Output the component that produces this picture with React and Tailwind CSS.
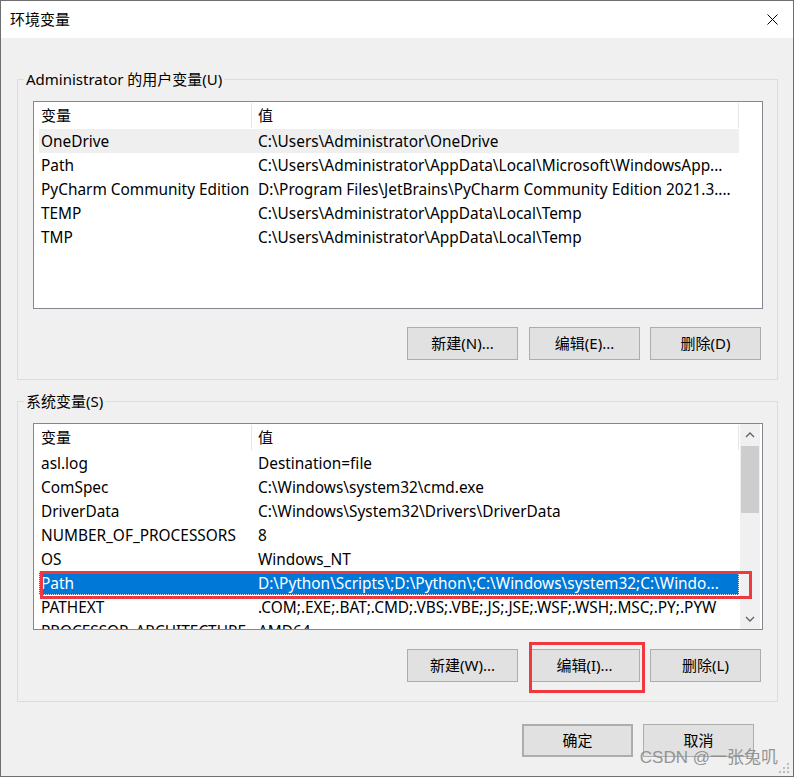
import React from 'react';

const userVars = [
  ['OneDrive', 'C:\\Users\\Administrator\\OneDrive'],
  ['Path', 'C:\\Users\\Administrator\\AppData\\Local\\Microsoft\\WindowsApp...'],
  ['PyCharm Community Edition', 'D:\\Program Files\\JetBrains\\PyCharm Community Edition 2021.3....'],
  ['TEMP', 'C:\\Users\\Administrator\\AppData\\Local\\Temp'],
  ['TMP', 'C:\\Users\\Administrator\\AppData\\Local\\Temp'],
];

const sysVars = [
  ['asl.log', 'Destination=file'],
  ['ComSpec', 'C:\\Windows\\system32\\cmd.exe'],
  ['DriverData', 'C:\\Windows\\System32\\Drivers\\DriverData'],
  ['NUMBER_OF_PROCESSORS', '8'],
  ['OS', 'Windows_NT'],
  ['Path', 'D:\\Python\\Scripts\\;D:\\Python\\;C:\\Windows\\system32;C:\\Windo...'],
  ['PATHEXT', '.COM;.EXE;.BAT;.CMD;.VBS;.VBE;.JS;.JSE;.WSF;.WSH;.MSC;.PY;.PYW'],
  ['PROCESSOR_ARCHITECTURE', 'AMD64'],
];

const ListHeader = () => (
  <div className="flex h-[27px] items-center">
    <div className="w-[217px] pl-[7px]">变量</div>
    <div className="w-px h-[25px] bg-[#e5e5e5]" />
    <div className="w-[486px] pl-[6px]">值</div>
    <div className="w-px h-[25px] bg-[#e5e5e5]" />
  </div>
);

const Row = ({ name, value, hover, selected }) => {
  let cls = 'ml-[5px] w-[700px] h-[24px] pt-[2px] flex items-center whitespace-nowrap text-[15.4px]';
  if (hover) cls += ' bg-[#efefef]';
  if (selected) cls += ' bg-[#0078d7] text-white outline outline-1 outline-dotted outline-[#cfe3f7] -outline-offset-1';
  return (
    <div className={cls}>
      <div className="w-[217px] pl-[2px] overflow-hidden">{name}</div>
      <div className="flex-1 pl-[2px] overflow-hidden">{value}</div>
    </div>
  );
};

const WinButton = ({ children, className = '' }) => (
  <button
    type="button"
    className={'w-[111px] h-[33px] bg-[#e1e1e1] border border-[#adadad] flex items-center justify-center ' + className}
  >
    {children}
  </button>
);

const ScrollBar = () => (
  <div className="w-[20px] h-full bg-[#f0f0f0] flex flex-col">
    <div className="h-[22px] flex items-center justify-center">
      <svg width="10" height="6" viewBox="0 0 10 6">
        <path d="M1 5 L5 1 L9 5" fill="none" stroke="#606060" strokeWidth="1.3" />
      </svg>
    </div>
    <div className="h-[67px] mx-[1px] bg-[#cdcdcd]" />
    <div className="flex-1" />
    <div className="h-[21px] flex items-center justify-center">
      <svg width="10" height="6" viewBox="0 0 10 6">
        <path d="M1 1 L5 5 L9 1" fill="none" stroke="#606060" strokeWidth="1.3" />
      </svg>
    </div>
  </div>
);

const GroupBox = ({ label, children, className = '' }) => (
  <div className={'relative ml-[16px] w-[761px] h-[301px] border border-[#dcdcdc] pl-[15px] pt-[21px] ' + className}>
    <span className="absolute left-[6px] top-[-11px] px-[2px] bg-[#f0f0f0] leading-[20px]">{label}</span>
    {children}
  </div>
);

export default function App() {
  return (
    <div className="w-[794px] h-[777px] border border-[#6f6f6f] flex flex-col text-[15px] text-black font-['Noto_Sans','Noto_Sans_CJK_SC',sans-serif] overflow-hidden">
      <div className="h-[37px] bg-white flex items-center justify-between pl-[9px] pr-[15px] shrink-0">
        <span>环境变量</span>
        <svg width="11" height="11" viewBox="0 0 11 11">
          <path d="M0.5 0.5 L10.5 10.5 M10.5 0.5 L0.5 10.5" stroke="#000" strokeWidth="1" />
        </svg>
      </div>

      <div className="relative flex-1 bg-[#f0f0f0] flex flex-col pt-[41px]">
        <GroupBox label="Administrator 的用户变量(U)">
          <div className="w-[730px] h-[208px] border border-[#828790] bg-white overflow-hidden">
            <ListHeader />
            {userVars.map(([n, v], i) => (
              <Row key={n} name={n} value={v} hover={i === 0} />
            ))}
          </div>
          <div className="flex mt-[18px] pl-[374px]">
            <WinButton>新建(N)...</WinButton>
            <WinButton className="ml-[11px]">编辑(E)...</WinButton>
            <WinButton className="ml-[10px]">删除(D)</WinButton>
          </div>
        </GroupBox>

        <GroupBox label="系统变量(S)" className="mt-[21px]">
          <div className="relative w-[730px] h-[207px] border border-[#828790] bg-white flex">
            <div className="w-[705px] h-full overflow-hidden">
              <ListHeader />
              {sysVars.map(([n, v], i) => (
                <Row key={n} name={n} value={v} selected={i === 5} />
              ))}
            </div>
            <div className="w-px" />
            <ScrollBar />
            <div className="w-[2px]" />
            <div className="absolute left-[6px] top-[147px] w-[712px] h-[28px] border-[3px] border-[#ee3a3f]" />
          </div>
          <div className="flex mt-[19px] pl-[374px]">
            <WinButton>新建(W)...</WinButton>
            <div className="relative ml-[11px]">
              <WinButton>编辑(I)...</WinButton>
              <div className="absolute left-0 top-[-7px] w-[116px] h-[51px] border-[3px] border-[#ee3a3f]" />
            </div>
            <WinButton className="ml-[10px]">删除(L)</WinButton>
          </div>
        </GroupBox>

        <div className="flex mt-[22px] pl-[521px]">
          <WinButton className="border-2 border-[#0078d7]">确定</WinButton>
          <WinButton className="ml-[10px]">取消</WinButton>
        </div>

        <span className="absolute right-[15px] bottom-[6px] text-[17px] text-[#8c8c8c] opacity-90 font-['Liberation_Sans','Noto_Sans_CJK_SC',sans-serif]">
          CSDN @一张兔叽
        </span>
        <svg className="absolute right-[2px] bottom-[1px]" width="12" height="12" viewBox="0 0 12 12">
          <rect x="8" y="0" width="2" height="2" fill="#bcbcbc" />
          <rect x="4" y="4" width="2" height="2" fill="#bcbcbc" />
          <rect x="8" y="4" width="2" height="2" fill="#bcbcbc" />
          <rect x="0" y="8" width="2" height="2" fill="#bcbcbc" />
          <rect x="4" y="8" width="2" height="2" fill="#bcbcbc" />
          <rect x="8" y="8" width="2" height="2" fill="#bcbcbc" />
        </svg>
      </div>
    </div>
  );
}
